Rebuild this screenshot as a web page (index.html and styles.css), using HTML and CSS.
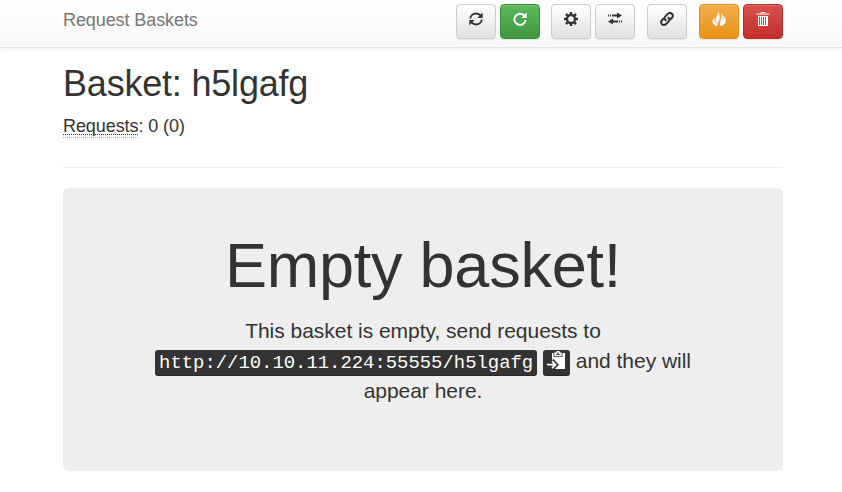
FILE: index.html
```html
<!DOCTYPE html>
<html lang="en">
<head>
<meta charset="utf-8">
<title>Request Baskets</title>
<link rel="stylesheet" href="styles.css">
</head>
<body>
<nav class="navbar">
  <div class="container navbar-inner">
    <a class="brand">Request Baskets</a>
    <div class="toolbar">
      <div class="group">
        <button class="btn" aria-label="Refresh"><svg viewBox="0 0 14 14"><g fill="none" stroke="currentColor" stroke-width="1.9"><path d="M1.300 6.500C1.500 3.500 4 1.500 7 1.500c1.800 0 3.200.6 4.300 1.800M12.700 7.500c-.2 3-2.700 5-5.700 5-1.800 0-3.200-.6-4.300-1.800"/></g><path fill="currentColor" d="M13.700.500V6H8.300zM.3 13.500V8h5.400z"/></svg></button>
        <button class="btn success" aria-label="Auto refresh"><svg viewBox="0 0 14 14"><path fill="none" stroke="currentColor" stroke-width="2" d="M11 3.300A5.600 5.600 0 1 0 12.600 8"/><path fill="currentColor" d="M13.700.500V6H8.200z"/></svg></button>
      </div>
      <div class="group">
        <button class="btn" aria-label="Settings"><svg viewBox="0 0 14 14"><circle cx="7" cy="7" r="4" fill="none" stroke="currentColor" stroke-width="2.300"/><path stroke="currentColor" stroke-width="2.500" d="M7 0v2.500M7 11.500V14M0 7h2.500M11.500 7H14M2 2l1.700 1.700M10.300 10.300l1.700 1.700M2 12l1.700-1.700M10.300 3.700l1.700-1.700"/></svg></button>
        <button class="btn" aria-label="Responses"><svg viewBox="0 0 14 14"><path fill="currentColor" d="M0 2.500h1v2H0zM2 2.500h1v2H2zM4 2.500h5V.5l5 3-5 3v-2H4zM14 8.500h-1v2h1zM12 8.500h-1v2h1zM10 8.500H5v-2l-5 3 5 3v-2h5z"/></svg></button>
      </div>
      <div class="group">
        <button class="btn" aria-label="Link"><svg viewBox="0 0 14 14"><g fill="none" stroke="currentColor" stroke-width="2" stroke-linecap="round" stroke-linejoin="round"><path d="M5.700 8.200C4.200 7.200 4.100 5.600 5.300 4.400l2.400-2.500c1.300-1.300 3.100-1.200 4.200-.1 1.100 1.100 1.200 2.700 0 4L10.500 7.200"/><path d="M8.200 5.700c1.500 1 1.600 2.700.3 3.900l-2.400 2.400c-1.300 1.300-3 1.300-4.100.2-1.100-1.100-1.200-2.700 0-4L3.400 6.800"/></g></svg></button>
      </div>
      <div class="group">
        <button class="btn warning" aria-label="Delete requests"><svg viewBox="0 0 14 14"><path fill="currentColor" stroke="currentColor" stroke-width=".3" d="M6 0C6.800 3.800 3.400 5 3.600 7.800c.1 1.700 1 2.600 1.300 3.900C3.200 10.900 2 9.200 2.100 6.500 1 7.500.3 9 .7 10.500c.5 1.900 2.300 3.200 4.600 3.400C4.300 11.200 7.800 9.200 7.500 5.200 7.300 2.700 7.100 1.200 6 0zM9.600 1.800c.8 3.600-.5 5.200-1.100 7.200-.5 1.700-.6 3.200-.2 4.700 3.300-.3 5.500-2.500 5.300-5.500-.1-1.700-.8-3-1.800-3.800.2 2-.1 3.400-1 4.500.7-2.800.4-5.400-1.200-7.100z"/></svg></button>
        <button class="btn danger" aria-label="Delete basket"><svg viewBox="0 0 14 14"><path fill="none" stroke="currentColor" d="M5 1.500v-1h4v1M.5 2h13M2 4.500h10M2.500 4.500v9h9v-9M4.500 5v8M6.500 5v8M8.500 5v8M10.500 5v8"/></svg></button>
      </div>
    </div>
  </div>
</nav>
<main class="container">
  <h1 class="title">Basket: h5lgafg</h1>
  <p class="counts"><abbr>Requests</abbr>: 0 (0)</p>
  <hr>
  <section class="jumbotron">
    <h1>Empty basket!</h1>
    <p>This basket is empty, send requests to <kbd>http://10.10.11.224:55555/h5lgafg</kbd> <kbd class="copy"><svg viewBox="0 0 19 19"><path fill="currentColor" d="M5 2h1.500v4h9V2H18v16H6.500l4.200-4.300L5 8.500z"/><path fill="none" stroke="currentColor" stroke-width="1.400" d="M8 4.500V2.200h1.600C9.600-.1 12.400-.1 12.400 2.200H14v2.300z"/><path fill="none" stroke="#333" stroke-width="4" d="M5 9.500l4.200 4.200L5 18"/><path fill="none" stroke="currentColor" stroke-width="1.800" d="M0 13.700h8M5 10.200l3.500 3.500L5 17.200"/></svg></kbd> and they will appear here.</p>
  </section>
</main>
</body>
</html>
```
FILE: styles.css
```css
* { box-sizing: border-box; }
body {
  margin: 0;
  background: #fff;
  color: #333;
  font: 14px/20px "Liberation Sans", Arial, sans-serif;
}
.container { width: 720px; margin-left: 63px; }
.navbar {
  height: 48px;
  background: linear-gradient(#fff, #f8f8f8);
  border-bottom: 1px solid #e4e4e4;
  box-shadow: 0 1px 5px rgba(0, 0, 0, .075);
}
.navbar-inner { display: flex; justify-content: space-between; padding-top: 4px; }
.brand {
  color: #777;
  font-size: 18px;
  line-height: 32px;
  letter-spacing: -.09px;
  text-shadow: 0 1px 0 rgba(255, 255, 255, .25);
}
.toolbar { display: flex; gap: 12px; }
.group { display: flex; gap: 4px; }
.group:first-child { margin-right: -1px; }
.btn {
  display: flex;
  justify-content: center;
  width: 40px;
  height: 35px;
  padding: 7px 0 0;
  border: 1px solid #ccc;
  border-radius: 4px;
  background: linear-gradient(#fff, #e0e0e0);
  box-shadow: inset 0 1px 0 rgba(255, 255, 255, .15), 0 1px 1px rgba(0, 0, 0, .075);
  color: #333;
}
.btn svg { width: 14px; height: 14px; }
.success { color: #fff; background: linear-gradient(#5cb85c, #419641); border-color: #3e8f3e; }
.warning { color: #fff; background: linear-gradient(#f0ad4e, #eb9316); border-color: #e38d13; }
.danger { color: #fff; background: linear-gradient(#d9534f, #c12e2a); border-color: #b92c28; }
.title { margin: 16px 0 10px; font-size: 36px; font-weight: 400; line-height: 40px; letter-spacing: -.2px; }
.counts { margin: 0; font-size: 18px; line-height: 25px; letter-spacing: -.08px; }
abbr {
  padding-bottom: 1px;
  border-bottom: 1px dotted #aaa;
  text-decoration: underline dotted 1px;
  text-underline-offset: 2px;
  text-decoration-skip-ink: none;
}
hr { margin: 28px 0 20px; border: 0; border-top: 1px solid #eee; }
.jumbotron {
  height: 283px;
  padding: 43px 60px 0;
  border-radius: 6px;
  background: #eee;
  text-align: center;
}
.jumbotron h1 { margin: 0 0 16px; font-size: 63px; font-weight: 400; line-height: 69px; letter-spacing: -.25px; }
.jumbotron p { margin: 0; font-size: 21px; line-height: 30px; letter-spacing: -.03px; }
kbd {
  padding: 2px 4px;
  border-radius: 3px;
  background: #333;
  box-shadow: inset 0 -1px 0 rgba(0, 0, 0, .25);
  color: #fff;
  font: 18.900px "Liberation Mono", monospace;
  letter-spacing: 0;
}
.copy { display: inline-block; height: 26px; padding-top: 1px; vertical-align: top; margin: 4px 0 -4px; line-height: 18px; }
.copy svg { display: block; width: 19px; height: 19px; }
```
